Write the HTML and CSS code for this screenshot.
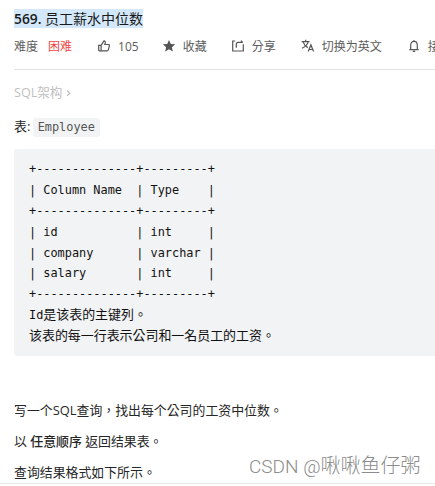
FILE: index.html
```html
<!DOCTYPE html>
<html lang="zh-TW">
<head>
    <meta charset="UTF-8">
    <meta name="viewport" content="width=device-width, initial-scale=1.0">
    <title>569. 员工薪水中位数</title>
    <link rel="stylesheet" href="styles.css">
</head>
<body>
    <div class="question">
        <h4 class="title"><span class="mark"><b>569.</b> 员工薪水中位数</span></h4>
        <div class="toolbar">
            <span class="label">难度</span>
            <span class="hard">困难</span>
            <span class="tool like">
                <svg class="icon" viewBox="0 0 14 14"><path d="M1.7 6.4h2.4v5.4H2.3l-.6-.6zM4.1 6.4 7 1.9c1.2 0 1.5.9 1.3 1.9l-.5 1.7h3.7c.8 0 1.1.6.9 1.3l-1.1 4c-.2.7-.6 1-1.2 1h-6"/></svg>
                105
            </span>
            <span class="tool star">
                <svg class="icon solid" viewBox="0 0 14 14"><path d="m7 .9 1.8 4 4.3.4-3.2 2.9.9 4.3L7 10.3l-3.8 2.2.9-4.3L.9 5.3l4.3-.4z"/></svg>
                收藏
            </span>
            <span class="tool share">
                <svg class="icon" viewBox="0 0 14 14"><path d="M4.2 2H1.7v10h10.6V5.2M5.3 8.8V5.3c0-1.2.7-1.9 1.9-1.9h4.5M9.9 1.6l1.8 1.8"/></svg>
                分享
            </span>
            <span class="tool lang">
                <svg class="icon" viewBox="0 0 14 14"><path d="M.6 2.6h8M4.6.8v1.8M2.2 3.1c.8 2.5 2.4 4.4 4.6 5.5M7.1 3.1C6.3 5.8 4 8 .9 9.2M7.2 12.5l2.7-6.6 2.7 6.6M8.2 10.5h3.5"/></svg>
                切换为英文
            </span>
            <span class="tool bell">
                <svg class="icon" viewBox="0 0 14 14"><path d="M2.3 10.6h9.4M3.7 10.4V6.2c0-2.3 1.3-3.8 3.3-3.8s3.3 1.5 3.3 3.8v4.2M7 1v1.2M5.8 12.4h2.4"/></svg>
                接收动态
            </span>
        </div>
        <div class="schema">SQL架构
            <svg class="arrow" viewBox="0 0 6 8"><path d="m1.2 1.6 2.6 2.6-2.6 2.6"/></svg>
        </div>
        <p class="table-name">表: <code>Employee</code></p>
<pre>+--------------+---------+
| Column Name  | Type    |
+--------------+---------+
| id           | int     |
| company      | varchar |
| salary       | int     |
+--------------+---------+
Id<span class="cjk">是该表的主键列。</span>
<span class="cjk">该表的每一行表示公司和一名员工的工资。</span></pre>
        <div class="text">
            <p>写一个SQL查询，找出每个公司的工资中位数。</p>
            <p>以 <b>任意顺序</b> 返回结果表。</p>
            <p>查询结果格式如下所示。</p>
        </div>
    </div>
    <div class="watermark">CSDN @<span>啾啾鱼仔粥</span></div>
</body>
</html>
```

FILE: styles.css
```css
* { box-sizing: border-box; }
body { margin: 0; height: 486px; overflow: hidden; position: relative; background: #fff; color: #262626; font-family: "Open Sans", "Noto Sans CJK TC", sans-serif; font-size: 12.9px; line-height: 21px; }
p { margin: 0; }
.question { height: 484px; padding: 9px 0 0 14px; border-bottom: 1px solid #e8e8e8; overflow: hidden; }
.title { margin: 0; height: 19px; color: #1a1a1a; font-size: 14px; font-weight: 400; line-height: 19px; white-space: nowrap; }
.title b { font-weight: 600; font-size: 13.8px; }
.mark { display: inline-block; height: 19px; background: #d4e8fc; }
.toolbar { display: flex; align-items: center; width: 500px; height: 42px; padding-bottom: 5px; border-bottom: 1px solid #e3e3e3; color: #5c5c5c; font-size: 12px; white-space: nowrap; }
.hard { margin-left: 10px; color: #ef4743; }
.tool { display: flex; align-items: center; gap: 7px; }
.like { margin-left: 25px; }
.star { margin-left: 23px; }
.share { margin-left: 24px; }
.lang { margin-left: 25px; }
.bell { margin-left: 25px; }
.icon { width: 14px; height: 14px; fill: none; stroke: #555; stroke-width: 1.2; }
.solid { fill: #555; stroke: none; }
.schema { display: flex; align-items: center; gap: 4px; margin-top: 12px; color: #bfbfbf; font-size: 12.6px; }
.arrow { width: 6px; height: 8px; fill: none; stroke: #bfbfbf; stroke-width: 1.3; }
.table-name { margin-top: 13px; }
code { display: inline-block; height: 19px; margin-left: -1px; padding: 0 5px; border-radius: 3px; background: #f1f3f5; color: #555; font-family: "DejaVu Sans Mono", monospace; font-size: 11.88px; line-height: 19px; }
pre { width: 450px; height: 207px; margin: 12px 0 0; padding: 10.4px 15px; border-radius: 3px; background: #f1f3f5; color: #111; font-family: "DejaVu Sans Mono", "Noto Sans CJK TC", monospace; font-size: 11.88px; line-height: 20.8px; }
.cjk { font-family: "Noto Sans CJK TC", sans-serif; font-size: 12.95px; line-height: 1; }
.text { display: flex; flex-direction: column; gap: 10px; margin-top: 44px; }
.text b { font-weight: 500; }
.watermark { position: absolute; left: 249px; top: 454px; color: #8c8c8c; font-family: Roboto, "Noto Sans CJK SC", sans-serif; font-size: 19px; font-weight: 300; line-height: 26px; white-space: nowrap; }
.watermark span { font-size: 20px; line-height: 1; }
```
